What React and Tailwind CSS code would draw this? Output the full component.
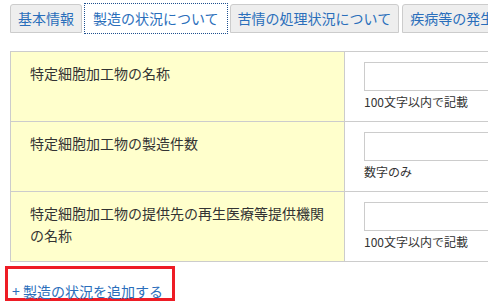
import React from "react";

const font = { fontFamily: '"Noto Sans CJK JP", "Noto Sans", sans-serif' };

function Tab({ children, active }) {
  if (active) {
    return (
      <div className="outline outline-1 outline-dotted outline-[#1d4f8f] outline-offset-0 border border-white bg-white h-[29px] px-[7px] flex items-center text-[14px] text-[#2a6ebb] whitespace-nowrap">
        {children}
      </div>
    );
  }
  return (
    <div className="border border-[#cccccc] bg-[#eeeeee] rounded-t-[3px] h-[29px] px-[7px] flex items-center text-[14px] text-[#2a6ebb] whitespace-nowrap">
      {children}
    </div>
  );
}

function Row({ label, help, last }) {
  return (
    <div className={"flex border-t border-[#cccccc] " + (last ? "border-b" : "")}>
      <div className="w-[335px] shrink-0 bg-[#ffffcc] border-l border-r border-[#cccccc] pl-[19px] pr-[18px] pt-[10px] text-[14px] leading-[22px] text-[#333333]">
        {label}
      </div>
      <div className="flex-1 pl-[19px] pt-[10px] pb-[10px]">
        <div className="h-[29px] w-[200px] border border-[#cccccc] bg-white" />
        <div className="mt-[2px] text-[12px] leading-[18px] text-[#333333]">{help}</div>
      </div>
    </div>
  );
}

export default function App() {
  return (
    <div className="w-[488px] h-[306px] overflow-hidden bg-white" style={font}>
      <div className="flex items-center gap-[3px] pl-[10px] pt-[4px] w-[700px]">
        <Tab>基本情報</Tab>
        <Tab active>製造の状況について</Tab>
        <Tab>苦情の処理状況について</Tab>
        <Tab>疾病等の発生状況について</Tab>
      </div>
      <div className="ml-[10px] mt-[18px] w-[600px]">
        <Row label="特定細胞加工物の名称" help="100文字以内で記載" />
        <Row label="特定細胞加工物の製造件数" help="数字のみ" />
        <Row label="特定細胞加工物の提供先の再生医療等提供機関の名称" help="100文字以内で記載" last />
      </div>
      <div className="ml-[5px] mt-[4px] inline-block border-[3px] border-[#ee1c25] w-[170px] h-[35px] pl-[4px] pt-[9px]">
        <span className="text-[14px] leading-[20px] text-[#2a6ebb] whitespace-nowrap">+ 製造の状況を追加する</span>
      </div>
    </div>
  );
}
